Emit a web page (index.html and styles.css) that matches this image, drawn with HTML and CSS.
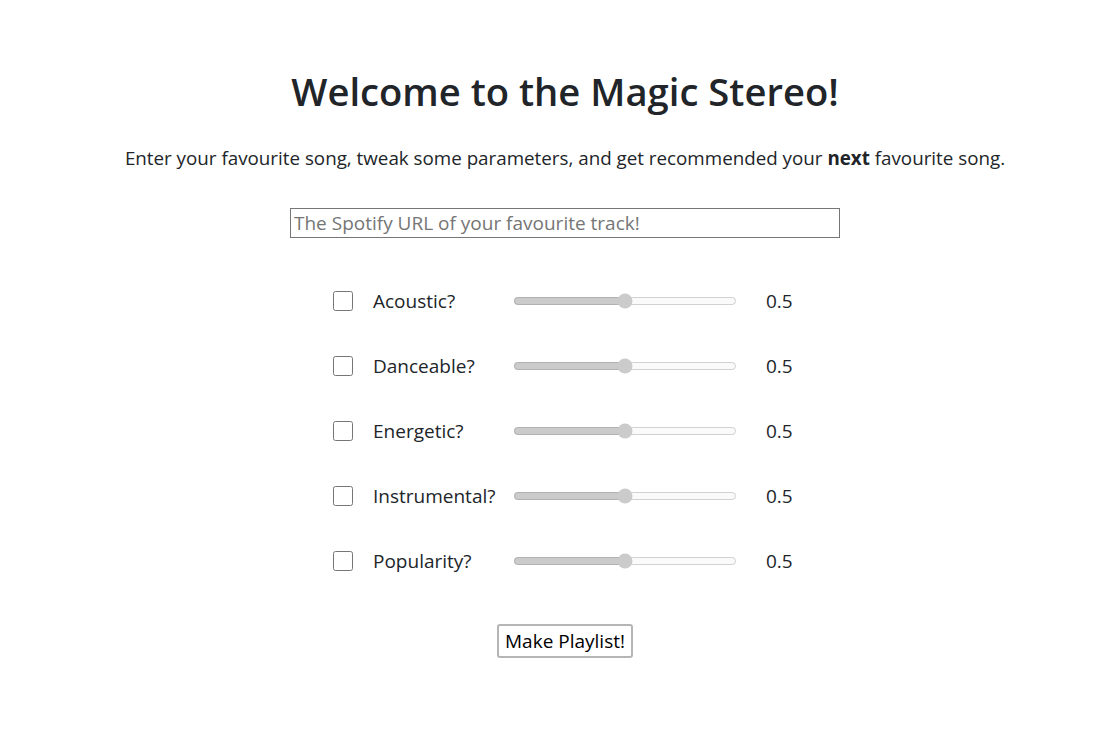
FILE: index.html
```html
<!DOCTYPE html>
<html lang="en">
<head>
<meta charset="utf-8">
<title>Magic Stereo</title>
<link rel="stylesheet" href="styles.css">
</head>
<body>
<main class="page">
  <h1 class="title">Welcome to the Magic Stereo!</h1>
  <p class="lead">Enter your favourite song, tweak some parameters, and get recommended your <b>next</b> favourite song.</p>
  <input class="url" type="text" placeholder="The Spotify URL of your favourite track!">
  <div class="params">
    <div class="row">
      <input class="check" type="checkbox">
      <span class="label">Acoustic?</span>
      <input class="slider" type="range" min="0" max="1" step="0.1" value="0.5" disabled>
      <span class="value">0.5</span>
    </div>
    <div class="row">
      <input class="check" type="checkbox">
      <span class="label">Danceable?</span>
      <input class="slider" type="range" min="0" max="1" step="0.1" value="0.5" disabled>
      <span class="value">0.5</span>
    </div>
    <div class="row">
      <input class="check" type="checkbox">
      <span class="label">Energetic?</span>
      <input class="slider" type="range" min="0" max="1" step="0.1" value="0.5" disabled>
      <span class="value">0.5</span>
    </div>
    <div class="row">
      <input class="check" type="checkbox">
      <span class="label">Instrumental?</span>
      <input class="slider" type="range" min="0" max="1" step="0.1" value="0.5" disabled>
      <span class="value">0.5</span>
    </div>
    <div class="row">
      <input class="check" type="checkbox">
      <span class="label">Popularity?</span>
      <input class="slider" type="range" min="0" max="1" step="0.1" value="0.5" disabled>
      <span class="value">0.5</span>
    </div>
  </div>
  <button class="make" type="button">Make Playlist!</button>
</main>
</body>
</html>
```

FILE: styles.css
```css
html, body {
  margin: 0;
  padding: 0;
  background: #ffffff;
}
body {
  font-family: "Open Sans", "Noto Sans", "Liberation Sans", sans-serif;
  color: #212529;
}
.page {
  display: flex;
  flex-direction: column;
  align-items: center;
  padding: 63px 0 0 24px;
}
.title {
  margin: 0;
  font-size: 38.2px;
  font-weight: 600;
  line-height: 56px;
}
.lead {
  margin: 26px 0 0 0;
  font-size: 18.8px;
  line-height: 26px;
}
.lead b {
  font-weight: 700;
}
.url {
  box-sizing: border-box;
  margin-top: 37px;
  width: 550px;
  height: 30px;
  padding: 0 3px;
  border: 1px solid #767676;
  border-radius: 0;
  font-family: inherit;
  font-size: 19px;
  color: #212529;
}
.url::placeholder {
  color: #757575;
}
.params {
  margin-top: 53px;
  display: flex;
  flex-direction: column;
  gap: 45px;
}
.row {
  display: flex;
  align-items: center;
  height: 20px;
  width: 464px;
}
.check {
  margin: 0;
  width: 20px;
  height: 20px;
  flex: none;
}
.label {
  margin-left: 20px;
  width: 141px;
  font-size: 19px;
}
.slider {
  margin: 0 0 0 -1px;
  width: 224px;
  flex: none;
}
.value {
  margin-left: 29px;
  font-size: 19px;
}
.make {
  margin-top: 53px;
  box-sizing: border-box;
  height: 34px;
  padding: 0 6px;
  font-family: inherit;
  font-size: 19px;
  color: #000;
  background: #ffffff;
  border: 2px solid #b5b5b5;
  border-radius: 3px;
}
```
